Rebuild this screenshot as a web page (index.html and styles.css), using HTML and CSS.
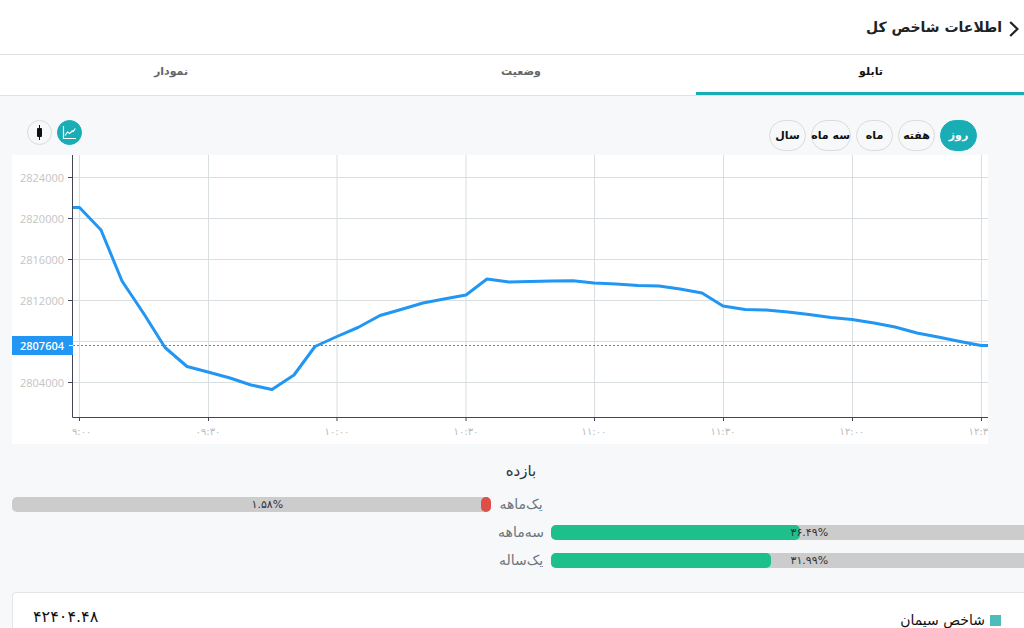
FILE: index.html
```html
<!DOCTYPE html>
<html lang="fa" dir="rtl">
<head>
<meta charset="utf-8">
<meta name="viewport" content="width=device-width, initial-scale=1">
<title>اطلاعات شاخص کل</title>
<link rel="stylesheet" href="styles.css">
</head>
<body>
<header class="header">
  <button class="back" type="button" aria-label="بازگشت">
    <svg width="10" height="16" viewBox="0 0 10 16"><path d="M1.2 1 8.400 8 1.200 15" fill="none" stroke="#222" stroke-width="2.200"/></svg>
  </button>
  <h1 class="title">اطلاعات شاخص کل</h1>
</header>
<nav class="tabs">
  <a class="tab tab-active" href="#board">تابلو</a>
  <a class="tab" href="#status">وضعیت</a>
  <a class="tab" href="#chart">نمودار</a>
</nav>
<main>
  <div class="toolbar">
    <div class="ranges">
      <button class="range range-active" type="button">روز</button>
      <button class="range" type="button">هفته</button>
      <button class="range" type="button">ماه</button>
      <button class="range range-wide" type="button">سه ماه</button>
      <button class="range" type="button">سال</button>
    </div>
    <div class="kinds">
      <button class="kind kind-active" type="button" aria-label="نمودار خطی">
        <svg width="15" height="15" viewBox="0 0 15 15" fill="none" stroke="#fff" stroke-width="1.200"><path d="M1.500 1v12.500H14M3 10.500 5.500 7l2.200 1.500 2.500-2.500 1 .4L13.300 3.500"/></svg>
      </button>
      <button class="kind" type="button" aria-label="نمودار شمعی">
        <svg width="7" height="15" viewBox="0 0 7 15" fill="#111"><rect x="1" y="3" width="5" height="9" rx="1"/><rect x="3" width="1" height="15"/></svg>
      </button>
    </div>
  </div>
  <figure class="chart">
    <svg class="plot" viewBox="0 0 976 289" direction="ltr">
      <path class="grid" d="M61 22.500H976M61 63.500H976M61 104.500H976M61 145.500H976M61 186.500H976M61 227.500H976M67.500 0V262M196.500 0V262M325 0V262M454 0V262M582.500 0V262M711.500 0V262M840.500 0V262M969.500 0V262"/>
      <path class="axis" d="M60.500 0V262.500H976M56 22.500H60M56 63.500H60M56 104.500H60M56 145.500H60M56 227.500H60M67.500 262V266M196.500 262V266M325 262V266M454 262V266M582.500 262V266M711.500 262V266M840.500 262V266M969.500 262V266"/>
      <path class="level" d="M61 190.500H976"/>
      <polyline class="line" points="61,52.5 67.500,52.5 89,75 110,126 132,159 153,192.500 175,211.500 196,217 218,223 239,230 260,234.500 282,220 303,191.500 325,181.500 346,172.500 368,160.500 389,154.500 411,148 432,144 454,140 475,124 497,127 518,126.500 540,126 561,125.800 582,128 604,129 626,130.500 647,131 668,134 690,138 711,151 733,154.500 754,155 776,157 797,159.500 819,162.500 840,164.500 862,168 883,172 905,178 926,182 948,186.500 969,190.500 976,190.500"/>
      <g class="value" text-anchor="end">
        <text x="52" y="27">2824000</text>
        <text x="52" y="68">2820000</text>
        <text x="52" y="109">2816000</text>
        <text x="52" y="150">2812000</text>
        <text x="52" y="232">2804000</text>
      </g>
      <rect x="0" y="181" width="61" height="19" fill="#2196f3"/>
      <path d="M57 190.500H61" stroke="#fff"/>
      <text class="value current" x="52" y="195" text-anchor="end">2807604</text>
      <svg x="60" y="266" width="916" height="23">
        <g class="time" text-anchor="middle">
          <text x="7" y="14">۰۹:۰۰</text>
          <text x="136" y="14">۰۹:۳۰</text>
          <text x="265" y="14">۱۰:۰۰</text>
          <text x="394" y="14">۱۰:۳۰</text>
          <text x="522" y="14">۱۱:۰۰</text>
          <text x="651" y="14">۱۱:۳۰</text>
          <text x="780" y="14">۱۲:۰۰</text>
          <text x="909" y="14">۱۲:۳۰</text>
        </g>
      </svg>
    </svg>
  </figure>
  <section class="returns">
    <h2 class="returns-title">بازده</h2>
    <div class="row">
      <div class="bar bar-loss"><div class="fill" style="width:2.1%"></div><span class="percent">۱.۵۸%</span></div>
      <span class="name">یک‌ماهه</span>
    </div>
    <div class="row">
      <span class="name">سه‌ماهه</span>
      <div class="bar bar-gain"><div class="fill" style="width:52%"></div><span class="percent">۳۶.۴۹%</span></div>
    </div>
    <div class="row">
      <span class="name">یک‌ساله</span>
      <div class="bar bar-gain"><div class="fill" style="width:46%"></div><span class="percent">۳۱.۹۹%</span></div>
    </div>
  </section>
  <section class="card">
    <span class="index-name"><i class="swatch"></i>شاخص سیمان</span>
    <span class="index-value">۴۲۴۰۴.۴۸</span>
  </section>
</main>
</body>
</html>
```
FILE: styles.css
```css
* {
  box-sizing: border-box;
}

html {
  overflow: hidden;
}

body {
  margin: 0;
  overflow: hidden;
  background: #f7f8fa;
  color: #222;
  font-family: "DejaVu Sans", sans-serif;
}

button {
  padding: 0;
  background: none;
  border: 0;
  color: inherit;
  font-family: inherit;
}

.header {
  display: flex;
  align-items: center;
  gap: 7px;
  height: 55px;
  padding: 0 5px;
  background: #fff;
  border-bottom: 1px solid #dfe1e3;
}

.back {
  display: flex;
  padding-top: 3px;
}

.title {
  margin: 0;
  font-size: 14px;
  line-height: 24px;
}

.tabs {
  display: grid;
  grid-template-columns: repeat(3, 1fr);
  height: 41px;
  margin: 0 -22px 0 -4px;
  background: #fff;
  border-bottom: 1px solid #dfe1e3;
}

.tab {
  padding-top: 7px;
  border-bottom: 3px solid transparent;
  color: #666;
  font-size: 11px;
  font-weight: bold;
  line-height: 20px;
  text-align: center;
  text-decoration: none;
}

.tab-active {
  border-color: #19aeb6;
  color: #111;
}

.toolbar {
  display: flex;
  justify-content: space-between;
  align-items: flex-start;
  padding: 24px 47px 4px 27px;
}

.ranges,
.kinds {
  display: flex;
  gap: 5px;
}

.range {
  width: 37px;
  height: 31px;
  border: 1px solid #d9dbdd;
  border-radius: 16px;
  color: #111;
  font-size: 11px;
  font-weight: bold;
  white-space: nowrap;
}

.range-wide {
  width: 40px;
}

.range-active,
.kind-active {
  background: #19adb5;
  border-color: #19adb5;
  color: #fff;
}

.kind {
  display: flex;
  align-items: center;
  justify-content: center;
  width: 25px;
  height: 25px;
  border: 1px solid #d9dbdd;
  border-radius: 50%;
}

.kind-active {
  border-color: #19adb5;
}

.chart {
  margin: 0 36px 0 12px;
  background: #fff;
}

.plot {
  display: block;
  width: 100%;
}

.grid {
  fill: none;
  stroke: #d9dfe0;
}

.axis {
  fill: none;
  stroke: #45455a;
}

.level {
  stroke: #2196f3;
  stroke-dasharray: 2 2;
}

.line {
  fill: none;
  stroke: #2196f3;
  stroke-width: 3;
  stroke-linejoin: round;
}

.value {
  fill: #c4c4c4;
  font-family: "Open Sans", sans-serif;
  font-size: 11px;
  font-weight: 500;
}

.current {
  fill: #fff;
  font-weight: 600;
}

.time {
  fill: #bbb;
  font-size: 10px;
}

.returns {
  display: grid;
  gap: 13px;
  margin: 15px -6px 0 12px;
}

.returns-title {
  margin: 0;
  color: #333;
  font-size: 15px;
  font-weight: normal;
  line-height: 25px;
  text-align: center;
}

.row {
  display: grid;
  grid-template-columns: 1fr 60px 1fr;
  align-items: center;
  direction: ltr;
}

.name {
  grid-area: 1 / 2;
  color: #6c757d;
  font-size: 14px;
  line-height: 15px;
  text-align: center;
  direction: rtl;
}

.bar {
  position: relative;
  height: 15px;
  background: #ccc;
  border-radius: 5px;
}

.bar-loss {
  grid-area: 1 / 1;
}

.bar-gain {
  grid-area: 1 / 3;
}

.fill {
  height: 100%;
  background: #1dc08a;
  border-radius: 5px;
}

.bar-loss .fill {
  margin-left: auto;
  background: #dc5049;
}

.percent {
  position: absolute;
  top: 0;
  left: 50%;
  color: #333;
  font-size: 11px;
  line-height: 15px;
}

.card {
  display: flex;
  justify-content: space-between;
  margin: 24px -12px 0 12px;
  padding: 11px 34px 12px 20px;
  background: #fff;
  border: 1px solid #e2e4e6;
  border-radius: 4px;
  color: #111;
  font-size: 14px;
  line-height: 26px;
}

.index-name {
  display: flex;
  align-items: center;
  gap: 5px;
  padding-top: 3px;
}

.index-value {
  font-size: 16px;
}

.swatch {
  width: 11px;
  height: 11px;
  background: #4dbdbc;
}
```
